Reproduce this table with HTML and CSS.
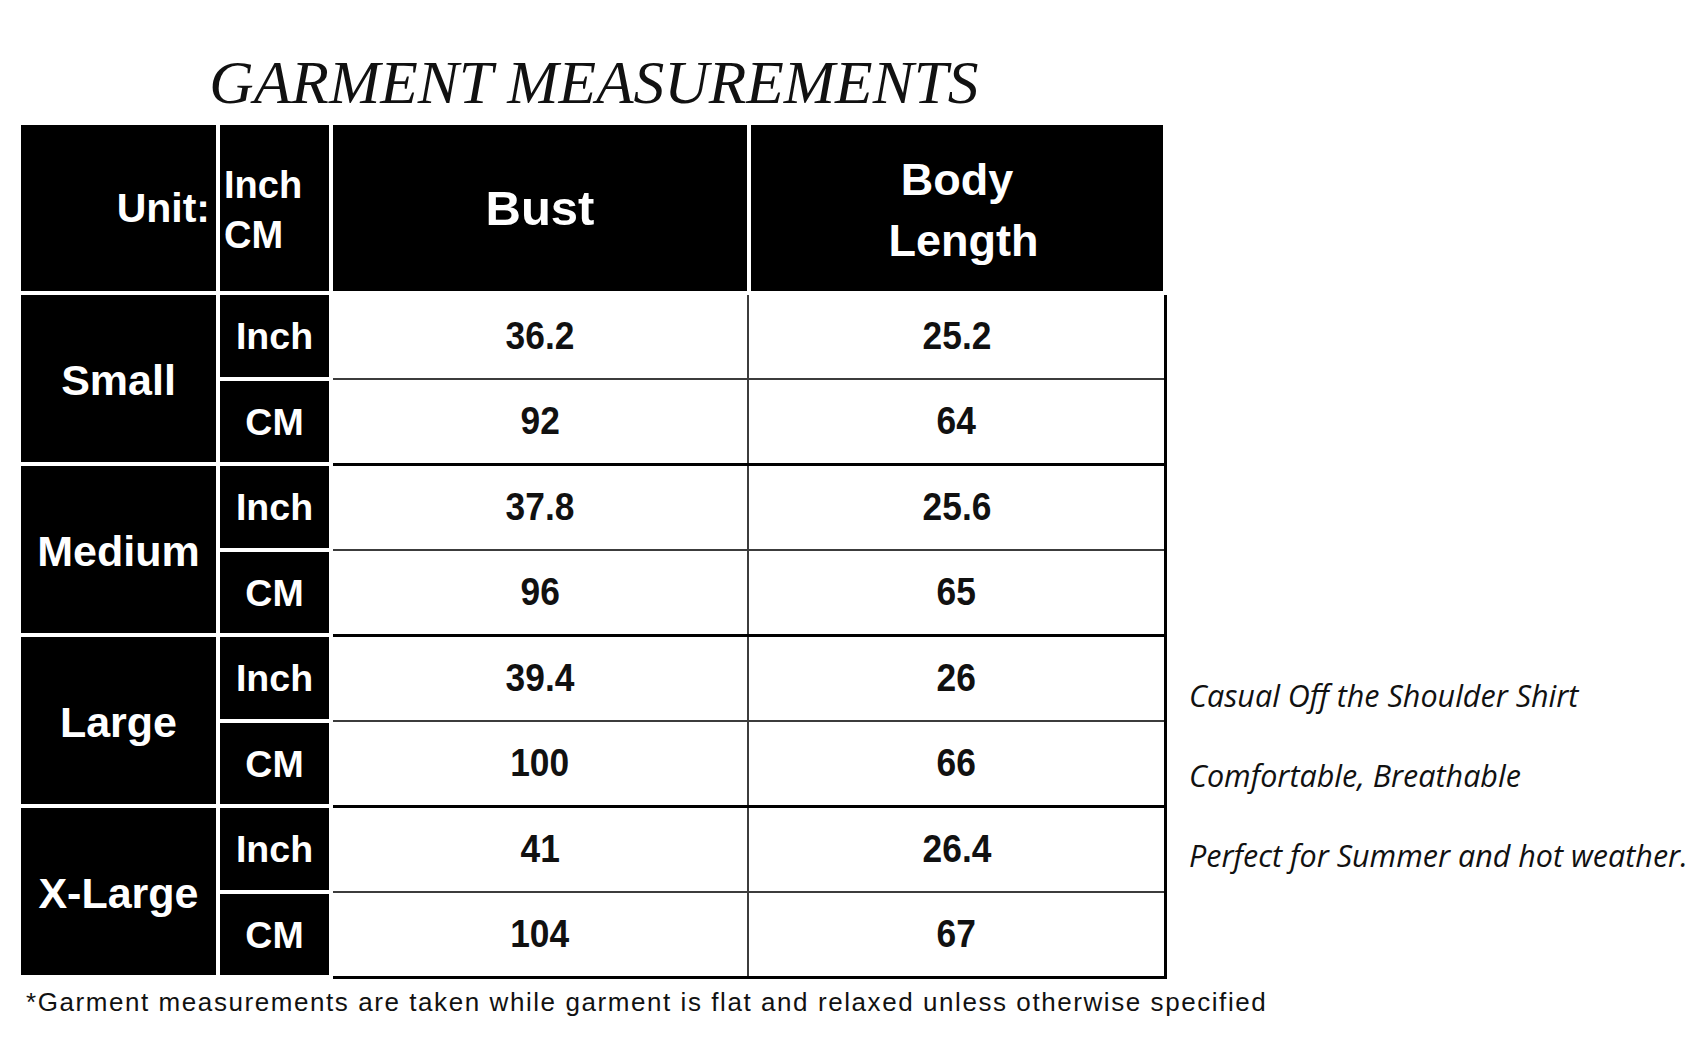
FILE: index.html
```html
<!DOCTYPE html>
<html lang="en">
<head>
<meta charset="utf-8">
<title>Garment Measurements</title>
<link rel="stylesheet" href="styles.css">
</head>
<body>
<div class="page">
  <div class="top">
    <div class="sheet">
      <h1 class="title">GARMENT MEASUREMENTS</h1>
      <div class="table">
        <div class="head">
          <div class="hcell c-size unit-label">Unit:</div>
          <div class="hcell c-unit unit-both"><span>Inch</span><span>CM</span></div>
          <div class="hcell c-bust head-text">Bust</div>
          <div class="hcell c-body head-text two"><span>Body</span><span class="second">Length</span></div>
        </div>

        <div class="group">
          <div class="size">Small</div>
          <div class="units"><div class="u">Inch</div><div class="u">CM</div></div>
          <div class="data">
            <div class="drow"><div class="d bust"><span class="n">36.2</span></div><div class="d"><span class="n">25.2</span></div></div>
            <div class="drow"><div class="d bust"><span class="n">92</span></div><div class="d"><span class="n">64</span></div></div>
          </div>
        </div>

        <div class="group">
          <div class="size">Medium</div>
          <div class="units"><div class="u">Inch</div><div class="u">CM</div></div>
          <div class="data">
            <div class="drow"><div class="d bust"><span class="n">37.8</span></div><div class="d"><span class="n">25.6</span></div></div>
            <div class="drow"><div class="d bust"><span class="n">96</span></div><div class="d"><span class="n">65</span></div></div>
          </div>
        </div>

        <div class="group">
          <div class="size">Large</div>
          <div class="units"><div class="u">Inch</div><div class="u">CM</div></div>
          <div class="data">
            <div class="drow"><div class="d bust"><span class="n">39.4</span></div><div class="d"><span class="n">26</span></div></div>
            <div class="drow"><div class="d bust"><span class="n">100</span></div><div class="d"><span class="n">66</span></div></div>
          </div>
        </div>

        <div class="group">
          <div class="size">X-Large</div>
          <div class="units"><div class="u">Inch</div><div class="u">CM</div></div>
          <div class="data">
            <div class="drow"><div class="d bust"><span class="n">41</span></div><div class="d"><span class="n">26.4</span></div></div>
            <div class="drow"><div class="d bust"><span class="n">104</span></div><div class="d"><span class="n">67</span></div></div>
          </div>
        </div>
      </div>
    </div>
    <div class="notes">
      <p>Casual Off the Shoulder Shirt</p>
      <p>Comfortable, Breathable</p>
      <p>Perfect for Summer and hot weather.</p>
    </div>
  </div>
  <p class="foot">*Garment measurements are taken while garment is flat and relaxed unless otherwise specified</p>
</div>
</body>
</html>
```

FILE: styles.css
```css
html, body {
  margin: 0;
  padding: 0;
  background: #ffffff;
}

body {
  font-family: "Liberation Sans", Arial, sans-serif;
  color: #000;
  width: 1700px;
  height: 1050px;
  overflow: hidden;
}

.page {
  padding-left: 21px;
}

.top {
  display: flex;
  align-items: flex-start;
}

.sheet {
  width: 1146px;
  flex: none;
}

.title {
  margin: 0 0 8px 0;
  padding-top: 47px;
  height: 70px;
  line-height: 70px;
  text-align: center;
  font-family: "Liberation Serif", "Times New Roman", serif;
  font-style: italic;
  font-weight: 400;
  font-size: 61.5px;
  color: #111;
}

.table {
  display: flex;
  flex-direction: column;
}

.head {
  display: flex;
  gap: 4px;
  height: 166px;
  margin-bottom: 4px;
}

.hcell {
  background: #000;
  color: #fff;
  font-weight: 700;
  display: flex;
  align-items: center;
}

.c-size { width: 195px; }
.c-unit { width: 109px; }
.c-bust { width: 414px; }
.c-body { width: 412px; }

.unit-label {
  justify-content: flex-end;
  padding-right: 6px;
  box-sizing: border-box;
  font-size: 41px;
}

.unit-both {
  flex-direction: column;
  justify-content: center;
  align-items: flex-start;
  padding-left: 4px;
  padding-top: 4px;
  box-sizing: border-box;
  font-size: 38px;
  line-height: 50px;
}

.head-text {
  justify-content: center;
  text-align: center;
  font-size: 49px;
}

.head-text.two {
  flex-direction: column;
  font-size: 45px;
  line-height: 61px;
  padding-top: 3px;
  box-sizing: border-box;
}

.head-text .second {
  margin-left: 13px;
}

.group {
  display: flex;
  height: 171px;
}

.size {
  width: 195px;
  height: 167px;
  padding-top: 3px;
  box-sizing: border-box;
  background: #000;
  color: #fff;
  font-weight: 700;
  font-size: 43px;
  display: flex;
  align-items: center;
  justify-content: center;
  flex: none;
}

.units {
  width: 109px;
  height: 167px;
  margin-left: 4px;
  display: flex;
  flex-direction: column;
  gap: 4px;
  flex: none;
}

.u {
  flex: 1;
  padding-top: 2px;
  background: #000;
  color: #fff;
  font-weight: 700;
  font-size: 37.5px;
  display: flex;
  align-items: center;
  justify-content: center;
}

.data {
  margin-left: 4px;
  width: 834px;
  height: 171px;
  box-sizing: border-box;
  border-right: 3px solid #000;
  border-bottom: 3px solid #000;
  display: flex;
  flex-direction: column;
}

.drow {
  flex: 1;
  display: flex;
}

.drow:first-child {
  border-bottom: 2px solid #3c3c3c;
}

.d {
  flex: 1;
  display: flex;
  align-items: center;
  justify-content: center;
  font-weight: 700;
  font-size: 38px;
  color: #111;
}

.d .n {
  display: inline-block;
  transform: scaleX(0.93);
}

.d.bust {
  flex: none;
  width: 414px;
  border-right: 2px solid #3c3c3c;
}

.notes {
  margin-left: 22px;
  padding-top: 655px;
}

.notes p {
  margin: 0;
  font-family: "Open Sans", Lato, sans-serif;
  font-style: italic;
  font-size: 30.5px;
  line-height: 80px;
  color: #111;
  white-space: nowrap;
}

.foot {
  margin: 8px 0 0 5px;
  font-family: "Liberation Sans", Arial, sans-serif;
  font-size: 26px;
  line-height: 30px;
  letter-spacing: 1.57px;
  color: #111;
  white-space: nowrap;
}
```
